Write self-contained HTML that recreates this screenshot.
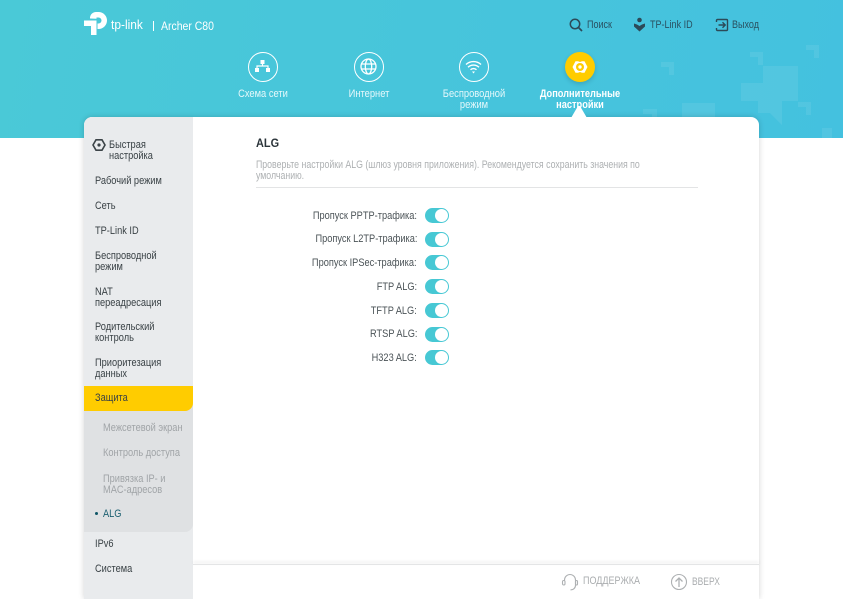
<!DOCTYPE html>
<html><head><meta charset="utf-8"><style>
*{box-sizing:border-box}
html,body{margin:0;padding:0;width:843px;height:599px;overflow:hidden;background:#fff;font-family:"Liberation Sans",sans-serif}
.a{position:absolute;white-space:nowrap}
.x{transform-origin:0 0}
#hd{position:absolute;left:0;top:0;width:843px;height:138px;background:linear-gradient(100deg,#4ac9d7,#44c1df)}
.nav{position:absolute;text-align:center;color:#e6f8fb;font-size:11px;line-height:11px;width:110px;white-space:nowrap;transform:scaleX(.85);transform-origin:50% 0}
.c{position:absolute;top:52px;width:30px;height:30px;border-radius:50%;border:1.5px solid #fff}
.m{position:absolute;left:95px;font-size:11px;line-height:11px;color:#394145;white-space:nowrap;transform:scaleX(.84);transform-origin:0 0}
.s{position:absolute;left:102.5px;font-size:11px;line-height:11px;color:#a0a4a7;white-space:nowrap;transform:scaleX(.84);transform-origin:0 0}
.l{position:absolute;right:426px;font-size:11px;color:#4b5357;line-height:12px;white-space:nowrap;transform:scaleX(.84);transform-origin:100% 0}
.sw{position:absolute;left:425px;width:24px;height:15px;border-radius:8px;background:#47c8d4}
.sw:after{content:"";position:absolute;right:1px;top:1px;width:13px;height:13px;border-radius:50%;background:#fff}
.top{position:absolute;top:19px;font-size:11px;line-height:12px;color:#2a5060;white-space:nowrap;transform:scaleX(.82);transform-origin:0 0}
</style></head><body>
<div id="hd">
<svg style="position:absolute;left:0;top:0" width="843" height="138" viewBox="0 0 843 138"><path fill="#fff" opacity=".08" d="M661 62h13v13h-5v-8h-8zM750 52h13v13h-5v-8h-8zM806 45h13v13h-5v-8h-8zM798 102h13v13h-5v-8h-8zM763 66h35v35h-35zM741 83h22v18h-22zM758 101h24v24l-12-12h-12zM682 103h33v35h-33zM643 109h14v29h-5v-24h-9zM822 128h10v10h-10z"/></svg>
</div>

<!-- logo -->
<svg class="a" style="left:84px;top:12px" width="24" height="24" viewBox="0 0 24 24"><path d="M6 6.500V6a6 6 0 0 1 6-6h2.500a8.500 8.500 0 0 1 0 17h-1v-5.500h1a3 3 0 0 0 0-6H12.500v1.200z" fill="#fff"/><path d="M0 8.500h12.500V23H7v-9H0z" fill="#fff"/></svg>
<div class="a x" style="left:111px;top:17px;color:#fff;font-size:13px;line-height:15px;transform:scaleX(.92)">tp-link</div>
<div class="a" style="left:153px;top:21px;width:1px;height:10px;background:#fff"></div>
<div class="a x" style="left:161px;top:20px;color:#fff;font-size:11.500px;line-height:14px;transform:scaleX(.91)">Archer C80</div>

<!-- top links -->
<svg class="a" style="left:569px;top:18px" width="14" height="14" viewBox="0 0 14 14"><circle cx="6" cy="6" r="4.700" fill="none" stroke="#2c4a58" stroke-width="1.500"/><path d="M9.500 9.500L13 13" stroke="#2c4a58" stroke-width="1.700"/></svg>
<div class="top" style="left:587px">Поиск</div>
<svg class="a" style="left:633px;top:17px" width="13" height="15" viewBox="0 0 13 15"><circle cx="6.500" cy="3" r="2.300" fill="#2c4a58"/><path d="M1 6.500l3 1 2.500 1.500L9 7.500l3-1v3L6.500 14.500 1 9.500z" fill="#2c4a58"/></svg>
<div class="top" style="left:650px">TP-Link ID</div>
<svg class="a" style="left:715px;top:18px" width="14" height="14" viewBox="0 0 14 14"><path d="M1.500 4V2.500a1 1 0 0 1 1-1h9a1 1 0 0 1 1 1v9a1 1 0 0 1-1 1h-9a1 1 0 0 1-1-1V10" fill="none" stroke="#2c4a58" stroke-width="1.400"/><path d="M3.500 7h6.500M7.500 4.300L10.200 7 7.500 9.700" fill="none" stroke="#2c4a58" stroke-width="1.400"/></svg>
<div class="top" style="left:732px">Выход</div>

<!-- nav -->
<div class="c" style="left:248px"><svg width="27" height="27" viewBox="0 0 27 27" style="display:block"><path d="M11.500 7h4v4h-4zM6 15h4v4H6zM17 15h4v4h-4z" fill="#fff"/><path d="M8 15v-2h11v2M13.500 11v2" fill="none" stroke="#fff" stroke-width="1.200"/></svg></div>
<div class="nav" style="left:208px;top:89px">Схема сети</div>
<div class="c" style="left:354px"><svg width="27" height="27" viewBox="0 0 27 27" style="display:block"><g fill="none" stroke="#fff" stroke-width="1.300"><circle cx="13.500" cy="13.500" r="7.500"/><ellipse cx="13.500" cy="13.500" rx="3.200" ry="7.500"/><path d="M6 11h15M6 16h15"/></g></svg></div>
<div class="nav" style="left:314px;top:89px">Интернет</div>
<div class="c" style="left:459px"><svg width="27" height="27" viewBox="0 0 27 27" style="display:block"><g fill="none" stroke="#fff" stroke-width="1.400"><path d="M6 11.500a11 11 0 0 1 15 0M8 14.300a8 8 0 0 1 11 0M10.500 16.800a4.200 4.200 0 0 1 6 0"/></g><path d="M12 18.500h3l-1.500 2z" fill="#fff"/></svg></div>
<div class="nav" style="left:419px;top:89px">Беспроводной<br>режим</div>
<div class="c" style="left:565px;border:0;background:#fc0;box-shadow:0 2px 5px rgba(0,0,0,.15)"><svg width="30" height="30" viewBox="0 0 30 30" style="display:block"><path d="M10.500 9.300h2.500L15 10v10l-2 .7h-2.500L7.500 15zM19.500 9.300H17L15 10v10l2 .7h2.500L22.500 15z" fill="#fff"/><circle cx="15" cy="15" r="4" fill="#fc0"/><circle cx="15" cy="15" r="1.700" fill="#fff"/></svg></div>
<div class="nav" style="left:525px;top:89px;color:#fff;font-weight:bold;transform:scaleX(.84)">Дополнительные<br>настройки</div>

<!-- card -->
<div class="a" style="left:84px;top:117px;width:675px;height:482px;background:#fff;border-radius:8px 8px 0 0;box-shadow:0 0 6px rgba(0,0,0,.18)"></div>
<svg class="a" style="left:571px;top:105px" width="16" height="13" viewBox="0 0 16 13"><path d="M0 13L7 1h2l7 12z" fill="#fff"/></svg>
<div class="a" style="left:84px;top:117px;width:109px;height:482px;background:#e9ebed;border-radius:8px 0 0 0"></div>
<div class="a" style="left:84px;top:400px;width:109px;height:132px;background:#dfe1e3;border-radius:0 0 8px 0"></div>
<div class="a" style="left:84px;top:386px;width:109px;height:25px;background:#fc0;border-radius:0 0 8px 0"></div>

<svg class="a" style="left:92px;top:138px" width="14" height="14" viewBox="0 0 14 14"><path d="M4 1.800h6L13 7l-3 5.200H4L1 7z" fill="none" stroke="#3c4448" stroke-width="1.600"/><circle cx="7" cy="7" r="1.600" fill="#3c4448"/></svg>
<div class="m" style="left:109px;top:140px">Быстрая<br>настройка</div>
<div class="m" style="top:176px">Рабочий режим</div>
<div class="m" style="top:201px">Сеть</div>
<div class="m" style="top:226px">TP-Link ID</div>
<div class="m" style="top:251px">Беспроводной<br>режим</div>
<div class="m" style="top:287px">NAT<br>переадресация</div>
<div class="m" style="top:322px">Родительский<br>контроль</div>
<div class="m" style="top:358px">Приоритезация<br>данных</div>
<div class="m" style="top:393px">Защита</div>
<div class="s" style="top:423px">Межсетевой экран</div>
<div class="s" style="top:448px">Контроль доступа</div>
<div class="s" style="top:474px">Привязка IP- и<br>MAC-адресов</div>
<div class="a" style="left:95px;top:512px;width:3px;height:3px;border-radius:50%;background:#0f5566"></div>
<div class="s" style="top:509px;color:#1b5f70">ALG</div>
<div class="m" style="top:539px">IPv6</div>
<div class="m" style="top:564px">Система</div>

<!-- content -->
<div class="a x" style="left:256px;top:138px;font-size:11.500px;line-height:13px;font-weight:bold;color:#2b343a;transform:scaleX(.95)">ALG</div>
<div class="a x" style="left:256px;top:160px;font-size:11px;line-height:11px;color:#adb0b2;transform:scaleX(.797)">Проверьте настройки ALG (шлюз уровня приложения). Рекомендуется сохранить значения по<br>умолчанию.</div>
<div class="a" style="left:256px;top:187px;width:442px;height:1px;background:#e3e4e5"></div>

<div class="l" style="top:210px">Пропуск PPTP-трафика:</div><div class="sw" style="top:208px"></div>
<div class="l" style="top:233px">Пропуск L2TP-трафика:</div><div class="sw" style="top:232px"></div>
<div class="l" style="top:257px">Пропуск IPSec-трафика:</div><div class="sw" style="top:255px"></div>
<div class="l" style="top:281px">FTP ALG:</div><div class="sw" style="top:279px"></div>
<div class="l" style="top:305px">TFTP ALG:</div><div class="sw" style="top:303px"></div>
<div class="l" style="top:328px">RTSP ALG:</div><div class="sw" style="top:327px"></div>
<div class="l" style="top:352px">H323 ALG:</div><div class="sw" style="top:350px"></div>

<!-- footer -->
<div class="a" style="left:193px;top:564px;width:566px;height:1px;background:#e4e5e6;box-shadow:0 -2px 3px rgba(0,0,0,.14)"></div>
<svg class="a" style="left:561px;top:573px" width="18" height="18" viewBox="0 0 18 18"><g fill="none" stroke="#aeb1b3" stroke-width="1.100"><path d="M3.500 7.500V7a5.500 5.500 0 0 1 11 0v5a4.500 4.500 0 0 1-5 4.800"/><rect x="1.500" y="7.500" width="2.500" height="4.500" rx="1.200"/><rect x="14.500" y="7.500" width="2" height="4.500" rx="1"/></g></svg>
<div class="a" style="left:583px;top:575px;font-size:11px;line-height:12px;color:#aaadaf;transform:scaleX(.82);transform-origin:0 0">ПОДДЕРЖКА</div>
<svg class="a" style="left:670px;top:573px" width="18" height="18" viewBox="0 0 18 18"><circle cx="9" cy="9" r="7.500" fill="none" stroke="#aeb1b3" stroke-width="1.100"/><path d="M9 14V5M5.500 8.500L9 5l3.500 3.500" fill="none" stroke="#aeb1b3" stroke-width="1.300"/></svg>
<div class="a" style="left:692px;top:576px;font-size:11px;line-height:12px;color:#aaadaf;transform:scaleX(.77);transform-origin:0 0">ВВЕРХ</div>
</body></html>
